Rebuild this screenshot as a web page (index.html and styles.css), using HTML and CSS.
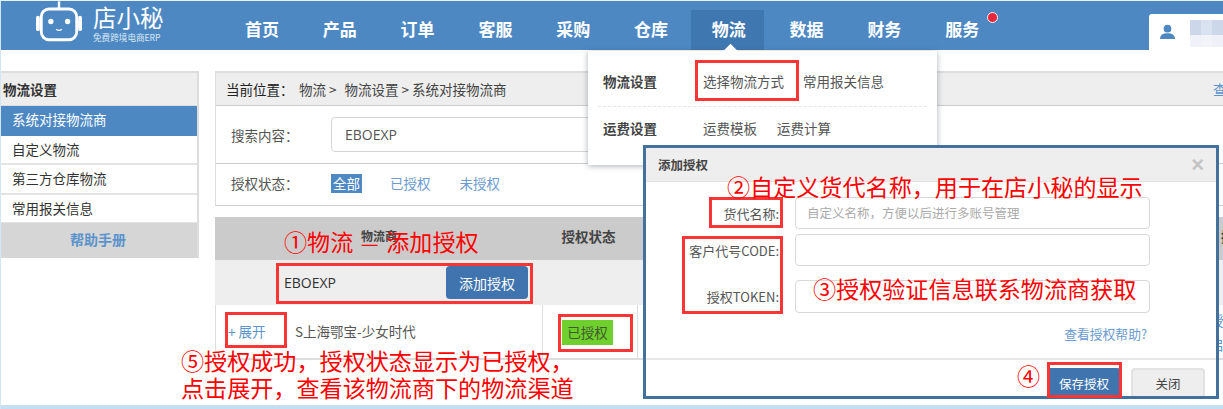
FILE: index.html
```html
<!DOCTYPE html>
<html lang="zh-CN">
<head>
<meta charset="utf-8">
<title>物流设置</title>
<link rel="stylesheet" href="styles.css">
</head>
<body>
<div class="page">
  <header class="top">
    <div class="logo">
      <svg class="robot" width="46" height="41" viewBox="0 0 48 42">
        <path d="M24 0v7" stroke="#fff" stroke-width="2.5" fill="none"/>
        <rect x="5.5" y="8" width="37" height="32" rx="8" fill="none" stroke="#fff" stroke-width="3"/>
        <rect x="0" y="15" width="4" height="16" rx="2" fill="#fff"/>
        <rect x="44" y="15" width="4" height="16" rx="2" fill="#fff"/>
        <circle cx="15.5" cy="21" r="2.8" fill="#fff"/>
        <circle cx="33" cy="21" r="2.8" fill="#fff"/>
        <path d="M21 29q3 2.6 6 0" stroke="#fff" stroke-width="1.4" fill="none"/>
      </svg>
      <div class="brand">
        <div class="brand-name">店小秘</div>
        <div class="brand-sub">免费跨境电商ERP</div>
      </div>
    </div>
    <nav class="nav">
      <a class="nav-item">首页</a>
      <a class="nav-item">产品</a>
      <a class="nav-item">订单</a>
      <a class="nav-item">客服</a>
      <a class="nav-item">采购</a>
      <a class="nav-item">仓库</a>
      <a class="nav-item active">物流</a>
      <a class="nav-item">数据</a>
      <a class="nav-item">财务</a>
      <a class="nav-item">服务<i class="dot"></i></a>
    </nav>
    <div class="user">
      <svg width="18" height="18" viewBox="0 0 18 18">
        <circle cx="9" cy="5" r="4.6" fill="#4d88c3"/>
        <path d="M0 17.5c0-5 3.5-7 9-7s9 2 9 7z" fill="#4d88c3"/>
      </svg>
      <div class="mosaic"><i></i><i></i><i></i><i></i><i></i><i></i></div>
    </div>
  </header>

  <div class="content">
    <aside class="side">
      <div class="side-head">物流设置</div>
      <div class="side-row current">系统对接物流商</div>
      <div class="side-row">自定义物流</div>
      <div class="side-row">第三方仓库物流</div>
      <div class="side-row">常用报关信息</div>
      <div class="side-help">帮助手册</div>
    </aside>

    <main class="main">
      <div class="crumb">
        <span class="crumb-label">当前位置：</span>
        <span class="crumb-path">物流 &gt;</span>
        <span class="crumb-path">物流设置 &gt; 系统对接物流商</span>
        <a class="crumb-help">查看帮助</a>
      </div>
      <div class="filter">
        <div class="filter-search">
          <span class="filter-label">搜索内容：</span>
          <div class="search-box">EBOEXP</div>
        </div>
        <div class="filter-state">
          <span class="filter-label">授权状态：</span>
          <a class="pill on">全部</a>
          <a class="pill">已授权</a>
          <a class="pill">未授权</a>
        </div>
      </div>
      <div class="thead">
        <div class="th-name">物流商</div>
        <div class="th-state">授权状态</div>
        <div class="th-op">操作</div>
      </div>
      <div class="add-row">
        <span class="add-name">EBOEXP</span>
        <button class="btn-add">添加授权</button>
      </div>
      <div class="data-row">
        <div class="td-name"><a class="expand">+ 展开</a><span class="carrier">S上海鄂宝-少女时代</span></div>
        <div class="td-state"><span class="badge">已授权</span></div>
        <div class="td-op"><a>授权</a><a>启用</a></div>
      </div>
    </main>
  </div>
  <div class="strip"></div>

  <div class="drop">
    <i class="drop-arrow"></i>
    <div class="drop-row first">
      <b class="drop-title">物流设置</b>
      <a class="drop-link wide">选择物流方式</a>
      <a class="drop-link">常用报关信息</a>
    </div>
    <div class="drop-row">
      <b class="drop-title">运费设置</b>
      <a class="drop-link mid">运费模板</a>
      <a class="drop-link">运费计算</a>
    </div>
  </div>

  <section class="modal">
    <div class="modal-head"><b>添加授权</b><span class="close-x">×</span></div>
    <div class="modal-body">
      <div class="field"><label>货代名称:</label><div class="field-input ph">自定义名称，方便以后进行多账号管理</div></div>
      <div class="field"><label>客户代号CODE:</label><div class="field-input"></div></div>
      <div class="field last"><label>授权TOKEN:</label><div class="field-input"></div></div>
      <a class="modal-help">查看授权帮助?</a>
    </div>
    <div class="modal-foot">
      <button class="btn-save">保存授权</button>
      <button class="btn-close">关闭</button>
    </div>
  </section>

  <div class="mark m-pick"></div>
  <div class="mark m-add"></div>
  <div class="mark m-expand"></div>
  <div class="mark m-badge"></div>
  <div class="mark m-name"></div>
  <div class="mark m-token"></div>
  <div class="mark m-save"></div>

  <div class="note n1">①物流<span class="note-dash">—</span>添加授权</div>
  <div class="note n2">②自定义货代名称，用于在店小秘的显示</div>
  <div class="note n3">③授权验证信息联系物流商获取</div>
  <div class="note n4">④</div>
  <div class="note n5">⑤授权成功，授权状态显示为已授权，<br>点击展开，查看该物流商下的物流渠道</div>
</div>
</body>
</html>
```
FILE: styles.css
```css
* { box-sizing: border-box; }
html, body { margin: 0; padding: 0; }
body {
  width: 1223px;
  height: 409px;
  overflow: hidden;
  background: #fff;
  color: #444;
  font-family: "Noto Sans CJK SC", "Liberation Sans", sans-serif;
  font-size: 13.5px;
}
a { text-decoration: none; }

.page {
  position: relative;
  width: 1223px;
  height: 409px;
  overflow: hidden;
  display: flex;
  flex-direction: column;
  border-left: 1px solid #d3e6f7;
  border-top: 1px solid #eaf2fa;
}

/* top bar */
.top {
  flex: none;
  height: 49px;
  margin-left: -1px;
  background: #4d88c3;
  display: flex;
  align-items: flex-end;
}
.logo {
  width: 224px;
  height: 49px;
  padding: 0 0 0 36px;
  display: flex;
  align-items: flex-start;
  gap: 11px;
  color: #fff;
}
.robot { flex: none; }
.brand { padding-top: 2px; }
.brand-name { font-size: 23.5px; line-height: 29px; white-space: nowrap; font-weight: 400; }
.brand-sub { font-size: 8.6px; line-height: 10px; color: #dbe8f5; white-space: nowrap; }
.nav { display: flex; gap: 4.8px; height: 40px; }
.nav-item {
  position: relative;
  display: block;
  padding: 0 18px 0 21px;
  height: 40px;
  line-height: 37px;
  color: #fff;
  font-size: 17px;
  font-weight: 700;
}
.nav-item.active { background: #3f77b0; }
.dot {
  position: absolute;
  left: 63px;
  top: 2px;
  width: 11px;
  height: 11px;
  border-radius: 50%;
  background: #e8263a;
  border: 1.5px solid #f4f4f4;
}
.user {
  margin-left: auto;
  width: 74px;
  height: 36px;
  background: #fff;
  border-radius: 3px 0 0 0;
  display: flex;
  align-items: flex-start;
  padding: 9px 0 0 11px;
  gap: 15px;
}
.mosaic {
  width: 33px;
  height: 27px;
  margin-top: -3px;
  display: grid;
  grid-template-columns: repeat(3, 11px);
  grid-template-rows: 15px 12px;
}
.mosaic i:nth-child(1) { background: #ccd8ea; }
.mosaic i:nth-child(2) { background: #d8e2f0; }
.mosaic i:nth-child(3) { background: #ccd8ea; }
.mosaic i:nth-child(4) { background: #eff2f8; }
.mosaic i:nth-child(5) { background: #f1f4f9; }
.mosaic i:nth-child(6) { background: #eef1f7; }

/* page body */
.content {
  flex: 1;
  display: flex;
  padding-top: 21px;
  gap: 16px;
  min-height: 0;
}

/* sidebar */
.side {
  flex: none;
  width: 198px;
  align-self: flex-start;
  border-top: 2px solid #ddd;
  border-right: 2px solid #ddd;
  color: #333;
}
.side-head {
  height: 33px;
  line-height: 32px;
  background: #eee;
  padding-left: 2px;
  font-weight: 700;
  border-bottom: 1px solid #ddd;
}
.side-row {
  height: 29.5px;
  line-height: 27px;
  padding-left: 11px;
  border-bottom: 2px solid #e4e4e4;
}
.side-row.current { background: #4d88c3; color: #fff; border-bottom: 0; }
.side-help {
  height: 35px;
  line-height: 33px;
  text-align: center;
  margin-top: -1px;
  background: #d6d6d6;
  color: #5b93cc;
  font-weight: 700;
  font-size: 14px;
  padding-right: 2px;
}

/* main */
.main { flex: 1; min-width: 0; overflow: hidden; }
.crumb {
  height: 35px;
  display: flex;
  align-items: center;
  padding-left: 10px;
  background: #eee;
  border: 1px solid #ddd;
  border-top-width: 2px;
  border-bottom: 1px solid #ccc;
  border-right: 0;
  font-size: 13.5px;
  white-space: nowrap;
  position: relative;
}
.crumb-label { color: #222; width: 73px; }
.crumb-path { margin-right: 8px; }
.crumb-help { position: absolute; left: 997px; color: #5b93cc; }
.filter {
  border-left: 1px solid #ddd;
  border-bottom: 1px solid #ccc;
}
.filter-search {
  height: 58px;
  display: flex;
  align-items: center;
  padding-left: 15px;
  border-bottom: 1px solid #ccc;
}
.filter-label { width: 100px; flex: none; color: #555; }
.search-box {
  width: 570px;
  height: 35px;
  line-height: 33px;
  border: 1px solid #d5d5d5;
  border-radius: 4px;
  padding-left: 13px;
  font-family: "Open Sans", "Liberation Sans", sans-serif;
  font-size: 14px;
  color: #555;
  margin-top: -1px;
}
.filter-state {
  height: 41px;
  display: flex;
  align-items: center;
  padding-left: 15px;
  padding-bottom: 3px;
}
.pill { color: #6b9bd0; margin-right: 29px; line-height: 19px; }
.pill.on { background: #4d88c3; color: #fff; padding: 0 2px; margin-right: 28px; }

.thead {
  margin-top: 11px;
  height: 43px;
  background: #cbcbcb;
  display: grid;
  grid-template-columns: 327px 95px 1fr;
  align-items: start;
  font-weight: 700;
}
.th-name { text-align: center; font-size: 12px; line-height: 38px; padding-left: 1px; }
.th-state { text-align: center; line-height: 38px; padding-right: 2px; }
.th-op { line-height: 38px; padding-left: 946px; margin-left: -362px; white-space: nowrap; color: #333; }
.add-row {
  height: 45px;
  background: #eee;
  display: flex;
  align-items: center;
  padding-left: 69px;
  position: relative;
}
.add-name { width: 162px; font-family: "Open Sans", "Liberation Sans", sans-serif; font-size: 14px; color: #333; }
.btn-add {
  width: 82px;
  height: 33px;
  padding: 0;
  border: 0;
  border-radius: 4px;
  background: #3f74ae;
  color: #fff;
  font: inherit;
  font-size: 14px;
}
.data-row {
  height: 55px;
  display: grid;
  grid-template-columns: 327px 95px 1fr;
  border-left: 1px solid #ddd;
  border-bottom: 2px solid #ddd;
}
.td-name { display: flex; align-items: center; padding-left: 12px; border-right: 1px solid #ddd; padding-bottom: 2px; }
.expand { color: #5b93cc; width: 67px; flex: none; }
.carrier { color: #555; white-space: nowrap; }
.td-state { border-right: 1px solid #ddd; padding: 15px 0 0 19px; }
.badge {
  display: block;
  width: 51px;
  height: 25px;
  line-height: 25px;
  text-align: center;
  background: #6fcf2c;
  color: #3f5a30;
}
.td-op {
  display: flex;
  flex-direction: column;
  padding: 3px 0 0 572px;
  color: #5b93cc;
  font-size: 13.5px;
  line-height: 24px;
  white-space: nowrap;
}

.strip { flex: none; height: 4px; margin-left: -1px; background: #c5dff2; }

/* dropdown */
.drop {
  position: absolute;
  left: 587px;
  top: 50px;
  width: 349px;
  height: 114px;
  background: #fff;
  box-shadow: 0 1px 6px rgba(70, 80, 95, 0.45);
  padding: 0 10px;
}
.drop-arrow {
  position: absolute;
  left: 137px;
  top: -5px;
  width: 11px;
  height: 11px;
  background: #fff;
  transform: rotate(45deg);
}
.drop-row {
  position: relative;
  display: flex;
  align-items: center;
  height: 41px;
  padding-left: 5px;
  font-size: 13.5px;
  white-space: nowrap;
}
.drop-row.first { height: 56px; border-bottom: 1px dashed #e6e6e6; padding-top: 4px; }
.drop-title { width: 100px; color: #444; }
.drop-link { color: #555; }
.drop-link.wide { width: 100px; }
.drop-link.mid { width: 74px; }

/* modal */
.modal {
  position: absolute;
  left: 642px;
  top: 144px;
  width: 576px;
  height: 254px;
  background: #fff;
  border: 3px solid #44709c;
  overflow: hidden;
}
.modal-head {
  height: 34px;
  background: #eee;
  border-bottom: 1px solid #e2e2e2;
  padding: 0 12px;
  display: flex;
  align-items: center;
  justify-content: space-between;
  font-size: 12.5px;
  color: #444;
}
.close-x { color: #c4c4c4; font-size: 22px; font-weight: 700; font-family: "Liberation Sans", sans-serif; }
.modal-body {
  height: 176px;
  padding-top: 15px;
  display: flex;
  flex-direction: column;
}
.field { display: flex; align-items: center; height: 32px; margin-bottom: 5px; }
.field:nth-child(2) { margin-bottom: 14px; }
.field.last { height: 33px; margin-bottom: 0; }
.field label { width: 133px; flex: none; text-align: right; font-size: 13px; white-space: nowrap; color: #555; }
.field-input {
  margin-left: 16px;
  width: 355px;
  height: 100%;
  border: 1px solid #d8d8d8;
  border-radius: 4px;
}
.field-input.ph { color: #aaa; font-size: 12.5px; line-height: 30px; padding-left: 11px; white-space: nowrap; }
.modal-help {
  align-self: flex-end;
  margin: 12px 69px 0 0;
  color: #6b9bd0;
  font-size: 12.8px;
  line-height: 18px;
}
.modal-foot {
  border-top: 2px solid #e8e8e8;
  display: flex;
  padding: 8px 0 0 401px;
  gap: 10px;
  align-items: flex-start;
}
.btn-save, .btn-close {
  width: 74px;
  height: 30px;
  padding: 0;
  border-radius: 4px;
  font: inherit;
  font-size: 12.5px;
}
.btn-save { background: #3f74ae; color: #fff; border: 0; }
.btn-close { background: #eee; border: 2px solid #e2e2e2; color: #444; }

/* red annotation frames */
.mark { position: absolute; border: 3px solid #f93535; }
.m-pick { left: 694px; top: 59px; width: 104px; height: 41px; }
.m-add { left: 275px; top: 262px; width: 257px; height: 41px; }
.m-expand { left: 224px; top: 311px; width: 62px; height: 36px; }
.m-badge { left: 557px; top: 313px; width: 75px; height: 38px; }
.m-name { left: 708px; top: 196px; width: 74px; height: 31px; }
.m-token { left: 681px; top: 235px; width: 101px; height: 78px; }
.m-save { left: 1046px; top: 361px; width: 75px; height: 36px; }

/* red annotation texts */
.note {
  position: absolute;
  color: #f00;
  font-size: 23.1px;
  line-height: 27px;
  white-space: nowrap;
}
.note-dash { display: inline-block; width: 33px; text-align: center; font-size: 20px; }
.n1 { left: 283px; top: 227px; }
.n2 { left: 726px; top: 172px; }
.n3 { left: 812px; top: 274px; }
.n4 { left: 1016px; top: 361px; }
.n5 { left: 180px; top: 346px; }
```
